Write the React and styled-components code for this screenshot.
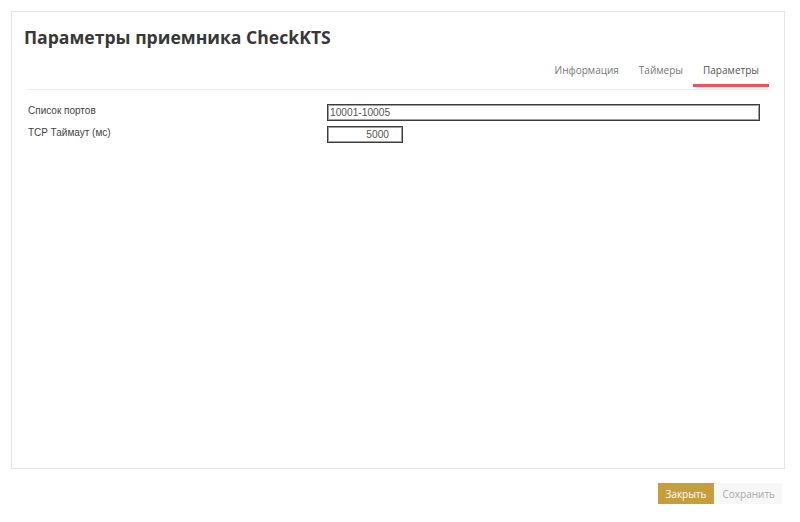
import styled, { createGlobalStyle } from 'styled-components';

const GlobalStyle = createGlobalStyle`
    html, body {
        margin: 0;
        padding: 0;
        background: #ffffff;
    }
    body {
        font-family: "Open Sans", "Liberation Sans", sans-serif;
        color: #333;
    }
`;

const Page = styled.div`
    display: flex;
    flex-direction: column;
    width: 800px;
    height: 522px;
    padding: 11px 15px 0 11px;
    box-sizing: border-box;
`;

const Card = styled.section`
    display: flex;
    flex-direction: column;
    height: 458px;
    border: 1px solid #e6e6e6;
    box-sizing: border-box;
    padding: 0 15px 0 16px;
`;

const Title = styled.h1`
    margin: 13px 0 0 -4px;
    font-size: 17.6px;
    font-weight: 700;
    line-height: 24px;
    color: #383838;
`;

const TabBar = styled.nav`
    display: flex;
    justify-content: flex-end;
    margin-top: 8px;
    border-bottom: 1px solid #eeeeee;
`;

const Tab = styled.div`
    padding: 0 10px;
    height: 30px;
    line-height: 26px;
    font-size: 10px;
    color: ${p => (p.$active ? '#555' : '#777')};
    border-bottom: 3px solid ${p => (p.$active ? '#f0525c' : 'transparent')};
    box-sizing: border-box;
    margin-bottom: 2px;
`;

const Form = styled.div`
    display: grid;
    grid-template-columns: 299px 1fr;
    row-gap: 5px;
    margin-top: 14px;
    padding-right: 9px;
`;

const Label = styled.label`
    margin-top: 1px;
    font-family: "Liberation Sans", Arial, sans-serif;
    font-size: 10px;
    line-height: 12px;
    color: #444;
`;

const Input = styled.input`
    width: ${p => p.$width || '100%'};
    height: 17px;
    box-sizing: border-box;
    border: 1px solid #3c3c3c;
    box-shadow: inset 0 0 0 1px #a0a0a0;
    padding: 0 ${p => (p.$right ? '13px' : '2px')};
    font-family: "Liberation Sans", Arial, sans-serif;
    font-size: 10.2px;
    color: #555;
    text-align: ${p => (p.$right ? 'right' : 'left')};
    background: #fff;
    outline: none;
    margin: 0;
`;

const Footer = styled.footer`
    display: flex;
    justify-content: flex-end;
    gap: 1px;
    margin-top: 14px;
    padding-right: 3px;
`;

const Button = styled.button`
    height: 21px;
    border: none;
    padding: 0 ${p => (p.$primary ? '8px' : '7px')};
    font-family: "Open Sans", "Liberation Sans", sans-serif;
    font-size: 10px;
    background: ${p => (p.$primary ? '#c79e3e' : '#f7f7f7')};
    color: ${p => (p.$primary ? '#ffffff' : '#a8a8a8')};
    cursor: pointer;
`;

export default function App() {
    return (
        <>
            <GlobalStyle />
            <Page>
                <Card>
                    <Title>Параметры приемника CheckKTS</Title>
                    <TabBar>
                        <Tab>Информация</Tab>
                        <Tab>Таймеры</Tab>
                        <Tab $active>Параметры</Tab>
                    </TabBar>
                    <Form>
                        <Label>Список портов</Label>
                        <Input defaultValue="10001-10005" />
                        <Label>TCP Таймаут (мс)</Label>
                        <Input $width="76px" $right defaultValue="5000" />
                    </Form>
                </Card>
                <Footer>
                    <Button $primary>Закрыть</Button>
                    <Button>Сохранить</Button>
                </Footer>
            </Page>
        </>
    );
}
